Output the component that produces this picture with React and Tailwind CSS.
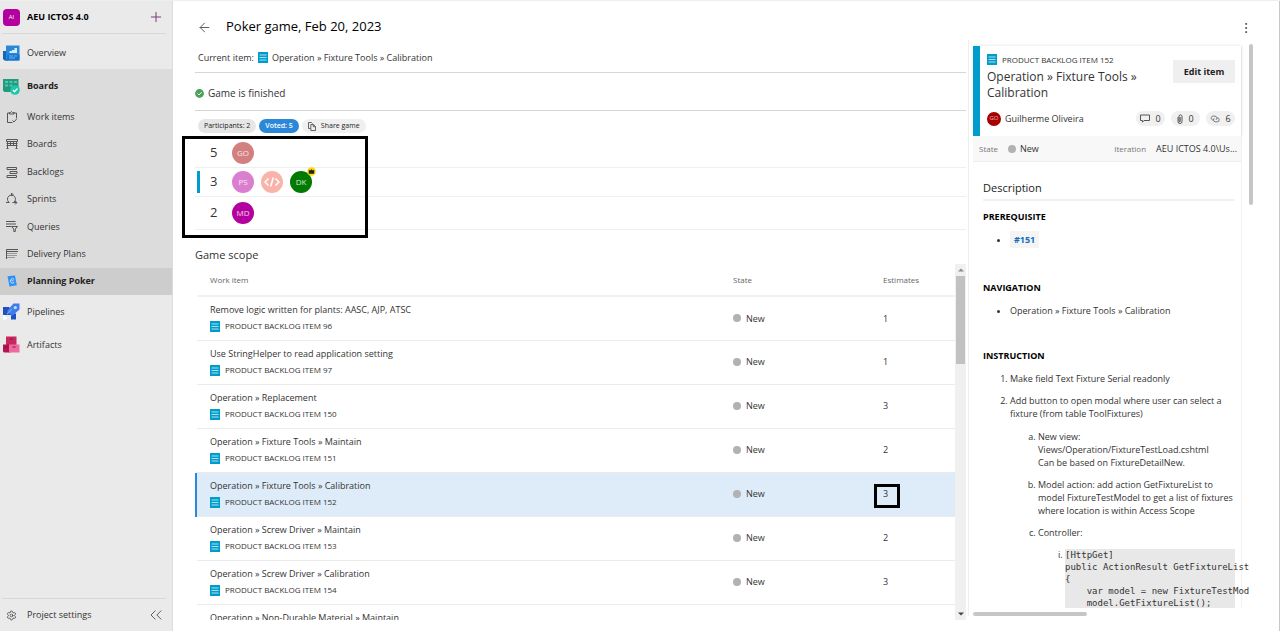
import React from 'react';
import clsx from 'clsx';
import { ArrowLeft, ChevronsLeft, MoreVertical, Plus, Settings } from 'lucide-react';

const boardLinks = [
  { label: 'Work items', icon: WorkItemsIcon },
  { label: 'Boards', icon: BoardColumnsIcon },
  { label: 'Backlogs', icon: BacklogsIcon },
  { label: 'Sprints', icon: SprintsIcon },
  { label: 'Queries', icon: QueriesIcon },
  { label: 'Delivery Plans', icon: PlansIcon },
  { label: 'Planning Poker', icon: PokerIcon, active: true },
];

const votes = [
  { value: 5, people: [{ initials: 'GO', color: 'bg-[#d47f7f]' }] },
  {
    value: 3,
    winner: true,
    people: [
      { initials: 'PS', color: 'bg-[#da7fcf]' },
      { initials: '</>', color: 'bg-[#fab3a9]', code: true },
      { initials: 'DK', color: 'bg-[#007a00]', badge: true },
    ],
  },
  { value: 2, people: [{ initials: 'MD', color: 'bg-[#b4009e]' }] },
];

const workItems = [
  { id: 96, title: 'Remove logic written for plants: AASC, AJP, ATSC', estimate: 1 },
  { id: 97, title: 'Use StringHelper to read application setting', estimate: 1 },
  { id: 150, title: 'Operation » Replacement', estimate: 3 },
  { id: 151, title: 'Operation » Fixture Tools » Maintain', estimate: 2 },
  { id: 152, title: 'Operation » Fixture Tools » Calibration', estimate: 3, selected: true },
  { id: 153, title: 'Operation » Screw Driver » Maintain', estimate: 2 },
  { id: 154, title: 'Operation » Screw Driver » Calibration', estimate: 3 },
  { id: 155, title: 'Operation » Non-Durable Material » Maintain', estimate: 2 },
];

const code = `[HttpGet]
public ActionResult GetFixtureList
{
    var model = new FixtureTestMod
    model.GetFixtureList();
}`;

/* Icons */

function OverviewIcon() {
  return (
    <svg viewBox="0 0 17 16" className="h-4 w-[17px]">
      <path d="M0 6h5v9.500H1.500L0 14z" fill="#1565b8" />
      <path d="M3 .5h13.500v14l-1 1H2.500L3 13z" fill="#2b88d8" />
      <path d="M4.500 9.500h12v6h-14L4 14z" fill="#1473cf" />
      <path d="M6.500 8V6H9v2zM9 8V5h2.500v3zM11.500 8V3H14v5z" fill="#d3ebff" />
      <path d="M6 11h4M11 11h3M6 13h6" stroke="#6db8f5" />
    </svg>
  );
}

function BoardsIcon() {
  return (
    <svg viewBox="0 0 17 17" className="size-[17px]">
      <path d="M0 1h15.500v13H1.500L0 12.500z" fill="#219a80" />
      <path d="M2 3h3v2H2zM6.500 3h3v2h-3zM11 3h3v2h-3zM2 6.500h3v2H2zM6.500 6.500h3v2h-3z" fill="#4fc9a8" />
      <circle cx="12" cy="12" r="4.800" fill="#1cc7a8" />
      <path d="m9.800 12 1.700 1.700 3-3.200" fill="none" stroke="#fff" strokeWidth="1.300" />
    </svg>
  );
}

function PipelinesIcon() {
  return (
    <svg viewBox="0 0 17 17" className="size-[17px]">
      <path d="M0 4h6l7 7v5.500H8V12H0z" fill="#1e50c0" />
      <path d="M16.500.5v6L9 13 4 8 10.500.5z" fill="#3f7bea" />
      <circle cx="12.300" cy="4.600" r="1.700" fill="#bcd6ff" />
      <path d="m4 11 5-5" stroke="#6ea0f7" strokeWidth="1.500" />
      <path d="M0 12h2v2h2.500L3 16.500H0z" fill="#fff" />
    </svg>
  );
}

function ArtifactsIcon() {
  return (
    <svg viewBox="0 0 17 17" className="size-[17px]">
      <path d="M3 .5h10.500V9H3z" fill="#c8285f" />
      <path d="M0 8.500h7.500v8H1l-1-1z" fill="#b01552" />
      <path d="M6 8.500h10.500v8H6z" fill="#ec6aa0" />
      <path d="M7 3h3M2 11h3M9.500 11h3" stroke="#8c0d3e" />
    </svg>
  );
}

function LineIcon({ children }) {
  return (
    <svg viewBox="0 0 12 12" className="size-3" fill="none" stroke="#555" strokeWidth="1">
      {children}
    </svg>
  );
}

function WorkItemsIcon() {
  return (
    <LineIcon>
      <path d="M3.500 2h-2v9.500h5M8 2h2.500v5M3.500 1.500h1l1-1 1 1H8V3H3.500z" />
      <path d="m6.500 9.500 1.500 1.500 3-3.500" />
    </LineIcon>
  );
}

function BoardColumnsIcon() {
  return (
    <LineIcon>
      <path d="M.5 1.500h11v2H.5zM.5 5.500h11M1.500 3.500v7M4.500 3.500v4.500M7.500 3.500v4.500M10.500 3.500v7M.5 7.500h11M.5 10.500h2M9.500 10.500h2" />
    </LineIcon>
  );
}

function BacklogsIcon() {
  return (
    <LineIcon>
      <path d="M1 1.500h9.500v2H1zM4 5.500h7v2H4zM1 9.500h9.500v2H1z" />
    </LineIcon>
  );
}

function SprintsIcon() {
  return (
    <LineIcon>
      <path d="M0 9.500h3.500M2.700 9A4 4 0 1 1 8 9.200M6.500 9.500h4M9 8l2 1.500L9 11.500M5.500 0v3L7 1.500z" />
    </LineIcon>
  );
}

function QueriesIcon() {
  return (
    <LineIcon>
      <path d="M0 1.500h9.500M0 4h10M0 6.500h5" />
      <path d="M5.500 6.500h6L9.300 9v2.500H7.800V9z" />
    </LineIcon>
  );
}

function PlansIcon() {
  return (
    <LineIcon>
      <path d="M.5 11V1.500H12M.5 3.500H12" />
      <path d="M1 5.500h10M1 7.500h10M1 9.500h8" stroke="#999" />
    </LineIcon>
  );
}

function PokerIcon() {
  return (
    <svg viewBox="0 0 12 12" className="size-3">
      <path d="m1.500 1.200 7.500-.8 1.800 9.800-7.300 1.300z" fill="#2e90f5" />
      <path d="M8 4.300a2.200 2.200 0 1 0 .3 3M5.500 5.800h2" fill="none" stroke="#d6ebff" strokeWidth=".9" />
    </svg>
  );
}

function BacklogItemIcon() {
  return (
    <svg viewBox="0 0 10 11" className="h-[11px] w-[10px] shrink-0">
      <path d="M0 0h10v11H0z" fill="#009ccc" />
      <path d="M1.500 3h7M1.500 5.500h7M1.500 8h7" stroke="#a9e0f2" />
    </svg>
  );
}

function CommentIcon() {
  return (
    <svg viewBox="0 0 10 9" className="h-[9px] w-[10px]" fill="none" stroke="#555">
      <path d="M.5 1h9v5.500H4L2.500 8.200V6.500h-2z" />
    </svg>
  );
}

function ClipIcon() {
  return (
    <svg viewBox="0 0 6 10" className="h-[10px] w-[6px]" fill="none" stroke="#555">
      <path d="M1 3v4.500a2 2 0 0 0 4 0v-5a1.500 1.500 0 0 0-3-.2V7.500h1.200V3" />
    </svg>
  );
}

function LinksIcon() {
  return (
    <svg viewBox="0 0 10 8" className="h-2 w-[10px]" fill="none" stroke="#666" strokeWidth=".9">
      <path d="M3.500 5A2 2 0 1 1 4 1.200h1.200a2 2 0 0 1 .8 3.600" />
      <path d="M4.300 3.200A2 2 0 0 0 5.200 6.800h2a2 2 0 1 0 0-4" />
    </svg>
  );
}

function PagesIcon() {
  return (
    <svg viewBox="0 0 8 9" className="h-[9px] w-2" fill="none" stroke="#555" strokeWidth=".9">
      <path d="M2.500 6.500h-2v-6h3l1 1M2.800 2.500h2.700l2 2v4H2.800zM5.300 2.500v2.200h2.200" />
    </svg>
  );
}

function StateDot() {
  return <span className="size-2 shrink-0 rounded-full bg-[#b2b2b2]" />;
}

/* Sidebar */

function NavLink({ icon: Icon, label, bold, className }) {
  return (
    <a href="#" className={clsx('flex items-center text-[9px]', bold ? 'font-bold text-[#222]' : 'text-[#333]', className)}>
      <span className="flex w-[27px] shrink-0 items-center pl-[3px]">
        <Icon />
      </span>
      {label}
    </a>
  );
}

function Sidebar() {
  return (
    <aside className="flex w-[173px] shrink-0 flex-col border-r border-[#dcdcdc] bg-[#eaeaea]">
      <div className="mr-[6px] ml-[2px] flex h-[33px] items-center border-b border-[#d8d8d8] pl-px">
        <span className="flex size-[17px] items-center justify-center rounded-sm bg-[#b4009e] text-[6px] text-white">AI</span>
        <span className="flex-1 pl-[7px] text-[9px] font-bold text-black">AEU ICTOS 4.0</span>
        <button aria-label="New" className="pr-[2px] text-[#7a3a78]">
          <Plus size={16} strokeWidth={1.500} />
        </button>
      </div>
      <nav className="flex flex-1 flex-col pt-[3px]">
        <NavLink icon={OverviewIcon} label="Overview" className="h-8" />
        <div className="bg-[#dcdcdc]">
          <NavLink icon={BoardsIcon} label="Boards" bold className="h-[34px]" />
          <div className="flex h-48 flex-col">
            {boardLinks.map(({ label, icon: Icon, active }) => (
              <a
                key={label}
                href="#"
                className={clsx('flex flex-1 items-center text-[9px]', active ? 'bg-[#cdcdcd] font-bold text-[#222]' : 'text-[#333]')}
              >
                <span className="w-[27px] shrink-0 pl-[6px]">
                  <Icon />
                </span>
                {label}
              </a>
            ))}
          </div>
        </div>
        <NavLink icon={PipelinesIcon} label="Pipelines" className="h-[33px]" />
        <NavLink icon={ArtifactsIcon} label="Artifacts" className="h-[33px]" />
      </nav>
      <div className="mr-[6px] ml-[2px] flex h-[33px] items-center border-t border-[#d8d8d8] text-[9px] text-[#333]">
        <a href="#" className="flex flex-1 items-center">
          <span className="w-[25px] pl-1">
            <Settings size={11} strokeWidth={1.500} />
          </span>
          Project settings
        </a>
        <button aria-label="Collapse" className="text-[#444]">
          <ChevronsLeft size={20} strokeWidth={1} />
        </button>
      </div>
    </aside>
  );
}

/* Game */

function Avatar({ person }) {
  return (
    <span className={clsx('relative flex size-[22px] items-center justify-center rounded-full text-[8px] text-white/80', person.color)}>
      {person.code ? (
        <svg viewBox="0 0 16 10" className="w-4" fill="none" stroke="#fff" strokeWidth="1.500">
          <path d="M4.500 1.500 1 5l3.500 3.500M11.500 1.500 15 5l-3.500 3.500M9.300.5l-2.600 9" />
        </svg>
      ) : (
        person.initials
      )}
      {person.badge && (
        <svg viewBox="0 0 10 10" className="absolute -top-1 -right-1 size-[9px]">
          <circle cx="5" cy="5" r="4.800" fill="#ffd800" />
          <path d="M2 3l1.500 1L5 2.500 6.500 4 8 3v4.500H2z" fill="#222" />
        </svg>
      )}
    </span>
  );
}

function Votes() {
  return (
    <div className="relative">
      <div className="pt-[6px]">
        {votes.map((vote) => (
          <div key={vote.value} className="flex h-[29px] items-center border-b border-[#efefef] pl-[2px] last:h-[33px]">
            <span className={clsx('h-[22px] w-[3px]', vote.winner && 'bg-[#009ccc]')} />
            <span className="w-8 pl-[10px] text-[13px] text-[#333]">{vote.value}</span>
            <span className="flex gap-[7px]">
              {vote.people.map((p) => (
                <Avatar key={p.initials} person={p} />
              ))}
            </span>
          </div>
        ))}
      </div>
      {/* frame around the votes */}
      <div className="absolute top-[3px] -left-[13px] h-[102px] w-[186px] border-[3px] border-black" />
    </div>
  );
}

function ScopeTable() {
  return (
    <div className="flex min-h-0 flex-1">
      <div className="min-w-0 flex-1 overflow-hidden">
        <table className="w-full table-fixed border-collapse text-left text-[9px] text-[#333]">
          <thead>
            <tr className="h-8 border-b-2 border-[#f2f2f2] text-[8px] text-[#666]">
              <th className="pl-[14px] font-normal">Work item</th>
              <th className="w-[150px] font-normal">State</th>
              <th className="w-[72px] font-normal">Estimates</th>
            </tr>
          </thead>
          <tbody>
            {workItems.map((item) => (
              <tr key={item.id} className={clsx('h-11 border-b border-[#ebebeb]', item.selected && 'bg-[#deecf9]')}>
                <td className={clsx('border-l-2 pl-[13px]', item.selected ? 'border-l-[#2b88d8]' : 'border-l-transparent')}>
                  <div className="truncate leading-4">{item.title}</div>
                  <div className="flex items-center gap-[5px] text-[8px] leading-4">
                    <BacklogItemIcon />
                    PRODUCT BACKLOG ITEM {item.id}
                  </div>
                </td>
                <td>
                  <span className="flex items-center gap-[5px]">
                    <StateDot />
                    New
                  </span>
                </td>
                <td>
                  <span className="relative">
                    {item.estimate}
                    {item.selected && <span className="absolute -top-[3px] -left-[9px] h-6 w-[26px] border-[3px] border-black" />}
                  </span>
                </td>
              </tr>
            ))}
          </tbody>
        </table>
      </div>
      <div className="flex w-[11px] flex-col items-center bg-[#f0f0f0] py-1">
        <svg viewBox="0 0 6 4" className="h-1 w-[6px]">
          <path d="M0 3.500 3 .5l3 3z" fill="#8a8a8a" />
        </svg>
        <div className="mt-1 h-[88px] w-[9px] bg-[#c1c1c1]" />
        <svg viewBox="0 0 6 4" className="mt-auto h-1 w-[6px]">
          <path d="M0 .5l3 3 3-3z" fill="#444" />
        </svg>
      </div>
    </div>
  );
}

function Game() {
  return (
    <main className="flex min-w-0 flex-1 flex-col pr-[2px] pb-[11px] pl-[22px]">
      <div className="flex h-[42px] items-center pt-[10px] pl-[2px]">
        <button aria-label="Back" className="text-[#555]">
          <ArrowLeft size={15} strokeWidth={1.500} />
        </button>
        <h1 className="pl-[14px] text-[13px] font-medium text-black">Poker game, Feb 20, 2023</h1>
      </div>
      <div className="flex h-[30px] items-center gap-1 border-b border-[#d6d6d6] pl-[3px] text-[9px] text-[#333]">
        Current item:
        <BacklogItemIcon />
        <span>Operation » Fixture Tools » Calibration</span>
      </div>
      <div className="flex h-[38px] items-center gap-1 border-b border-[#d6d6d6] pt-1 text-[10px] text-[#333]">
        <svg viewBox="0 0 9 9" className="size-[9px]">
          <circle cx="4.500" cy="4.500" r="4.400" fill="#4aa15a" />
          <path d="m2.500 4.500 1.500 1.500 2.600-2.800" fill="none" stroke="#fff" />
        </svg>
        Game is finished
      </div>
      <div className="flex items-center gap-[3px] pt-2 pl-[3px] text-[7px] leading-[14px] text-[#222]">
        <span className="rounded-full bg-[#e6e6e6] px-[6px]">Participants: 2</span>
        <span className="rounded-full bg-[#2b88d8] px-[6px] font-semibold text-white">Voted: 5</span>
        <button className="flex items-center gap-[5px] rounded-full bg-[#f0f0f0] px-[6px]">
          <PagesIcon />
          Share game
        </button>
      </div>
      <Votes />
      <h2 className="flex h-[34px] items-center pt-4 text-[11px] text-[#333]">Game scope</h2>
      <ScopeTable />
    </main>
  );
}

/* Details */

function Count({ icon: Icon, value, label }) {
  return (
    <span aria-label={label} className="flex h-[15px] w-[29px] items-center justify-center gap-[5px] rounded-full bg-[#f0f0f0] text-[9px] text-[#333]">
      <Icon />
      {value}
    </span>
  );
}

function Description() {
  return (
    <div className="pt-[19px] pr-[6px] pl-[10px] text-[9px] leading-[13px] text-[#333]">
      <h3 className="border-b-2 border-[#f2f2f2] pb-1 text-[11px] leading-[14px] font-medium text-[#222]">Description</h3>
      <h4 className="pt-[9px] font-bold text-black">PREREQUISITE</h4>
      <ul className="list-disc pt-[10px] pl-[27px]">
        <li>
          <a href="#" className="bg-[#f4f4f4] px-1 py-[2px] font-bold text-[#106ebe]">
            #151
          </a>
        </li>
      </ul>
      <h4 className="pt-[35px] font-bold text-black">NAVIGATION</h4>
      <ul className="list-disc pt-[10px] pl-[27px]">
        <li>Operation » Fixture Tools » Calibration</li>
      </ul>
      <h4 className="pt-8 font-bold text-black">INSTRUCTION</h4>
      <ol className="flex list-decimal flex-col gap-[9px] pt-[10px] pl-[27px]">
        <li>Make field Text Fixture Serial readonly</li>
        <li>
          Add button to open modal where user can select a fixture (from table ToolFixtures)
          <ol className="flex list-[lower-alpha] flex-col gap-[9px] pt-[10px] pl-7">
            <li>
              New view: Views/Operation/FixtureTestLoad.cshtml
              <br />
              Can be based on FixtureDetailNew.
            </li>
            <li>Model action: add action GetFixtureList to model FixtureTestModel to get a list of fixtures where location is within Access Scope</li>
            <li>
              Controller:
              <ol className="list-[lower-roman] pt-[9px] pl-[27px]">
                <li>
                  <pre className="bg-[#e8e8e8] font-['DejaVu_Sans_Mono',monospace] text-[9px] leading-3">{code}</pre>
                </li>
              </ol>
            </li>
          </ol>
        </li>
      </ol>
    </div>
  );
}

function Details() {
  return (
    <section className="flex w-[312px] shrink-0 flex-col border-r border-[#c8c8c8] pb-[15px]">
      <div className="flex h-[39px] items-center justify-end pt-[15px] pr-[26px]">
        <button aria-label="More" className="text-[#444]">
          <MoreVertical size={14} strokeWidth={1.500} />
        </button>
      </div>
      <div className="flex min-h-0 flex-1 border-l border-[#eee] pl-1">
        <div className="flex w-[276px] flex-col">
          <div className="min-h-0 flex-1 overflow-hidden pt-[6px]">
            <div className="mr-[7px] border-r border-[#f2f2f2]">
              <div className="border-l-[7px] border-[#009ccc] pt-2 pr-[6px] pl-[7px] shadow-[0_0_4px_rgba(0,0,0,0.12)]">
                <div className="flex items-start justify-between">
                  <div>
                    <div className="flex h-[11px] items-center gap-[5px] text-[8px] text-[#333]">
                      <BacklogItemIcon />
                      PRODUCT BACKLOG ITEM 152
                    </div>
                    <h2 className="w-[160px] pt-1 text-[12px] leading-4 text-[#333]">Operation » Fixture Tools » Calibration</h2>
                  </div>
                  <button className="mt-[6px] h-[23px] w-[62px] bg-[#efefef] text-[9px] font-bold text-[#222]">Edit item</button>
                </div>
                <div className="flex h-[35px] items-center gap-[6px] text-[#333]">
                  <span className="flex size-[14px] items-center justify-center rounded-full bg-[#a80000] text-[6px] text-white/70">GO</span>
                  <span className="-ml-[2px] flex-1 text-[9px]">Guilherme Oliveira</span>
                  <Count icon={CommentIcon} value={0} label="Comments" />
                  <Count icon={ClipIcon} value={0} label="Attachments" />
                  <Count icon={LinksIcon} value={6} label="Links" />
                </div>
              </div>
              <div className="flex h-[26px] items-center border-b border-[#eee] bg-[#f8f8f8] pr-1 pl-[6px] text-[9px] text-[#333]">
                <span className="w-[29px] text-[8px] text-[#777]">State</span>
                <StateDot />
                <span className="flex-1 pl-1">New</span>
                <span className="pr-[10px] text-[8px] text-[#777]">Iteration</span>
                <span>AEU ICTOS 4.0\Us...</span>
              </div>
              <Description />
            </div>
          </div>
          <div className="mt-1 h-1 w-[114px] rounded-full bg-[#c6c6c6]" />
        </div>
        <div className="mt-1 h-[161px] w-1 rounded-full bg-[#c6c6c6]" />
      </div>
    </section>
  );
}

export default function App() {
  return (
    <div className="flex h-screen overflow-hidden border-t border-[#eee] bg-white font-['Open_Sans','Noto_Sans',sans-serif]">
      <Sidebar />
      <Game />
      <Details />
    </div>
  );
}
